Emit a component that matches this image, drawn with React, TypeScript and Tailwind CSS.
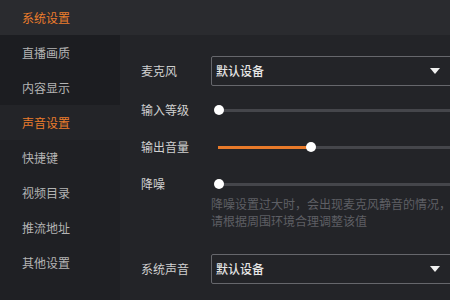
import React from 'react';

const font = { fontFamily: '"Noto Sans CJK SC", "Noto Sans", sans-serif' };

function Dropdown({ value }: { value: string }) {
  return (
    <div className="flex h-[30px] w-[242px] shrink-0 items-center justify-between rounded-[2px] border border-[#66676c] pl-[4px] pr-[12px]">
      <span className="text-[12px] font-medium text-[#e6e6e6]">{value}</span>
      <svg width="10" height="6" viewBox="0 0 10 6">
        <path d="M0 0 L10 0 L5 6 Z" fill="#f0f0f0" />
      </svg>
    </div>
  );
}

function Slider({ pct }: { pct: number }) {
  return (
    <div className="relative ml-[7px] h-[20px] w-[240px] shrink-0">
      <div className="absolute left-0 right-0 top-[9px] h-[3px] bg-[#45464b]" />
      <div className="absolute left-0 top-[9px] h-[3px] bg-[#e87a2a]" style={{ width: `${pct}px` }} />
      <div
        className="absolute top-[5px] h-[10px] w-[10px] rounded-full bg-white"
        style={{ left: `${pct - 5}px` }}
      />
    </div>
  );
}

function Label({ children }: { children: React.ReactNode }) {
  return <div className="w-[70px] shrink-0 text-[12px] text-[#d0d0d0]">{children}</div>;
}

export default function App() {
  const sub1 = ['直播画质', '内容显示'];
  const sub2 = ['快捷键', '视频目录', '推流地址', '其他设置'];
  return (
    <div className="flex h-[300px] w-[450px] flex-col overflow-hidden bg-[#232428]" style={font}>
      <div className="flex h-[35px] shrink-0 items-center bg-[#2a2b2f] pl-[22px] text-[12px] text-[#ec7d2c]">
        系统设置
      </div>
      <div className="flex flex-1">
        <div className="flex w-[120px] shrink-0 flex-col bg-[#1f2024]">
          <div className="bg-[#1c1d21]">
            {sub1.map((s) => (
              <div key={s} className="flex h-[35px] items-center pl-[22px] text-[12px] text-[#b4b4b4]">
                {s}
              </div>
            ))}
          </div>
          <div className="flex h-[35px] items-center bg-[#232428] pl-[22px] text-[12px] text-[#ec7d2c]">
            声音设置
          </div>
          {sub2.map((s) => (
            <div key={s} className="flex h-[35px] items-center pl-[22px] text-[12px] text-[#b4b4b4]">
              {s}
            </div>
          ))}
        </div>
        <div className="flex flex-1 flex-col pl-[21px] pt-[21px]">
          <div className="flex items-center">
            <Label>麦克风</Label>
            <Dropdown value="默认设备" />
          </div>
          <div className="mt-[14px] flex items-center">
            <Label>输入等级</Label>
            <Slider pct={1} />
          </div>
          <div className="mt-[17px] flex items-center">
            <Label>输出音量</Label>
            <Slider pct={93} />
          </div>
          <div className="mt-[17px] flex items-center">
            <Label>降噪</Label>
            <Slider pct={1} />
          </div>
          <div className="ml-[70px] mt-[1px] whitespace-nowrap text-[12px] leading-[17px] text-[#5e5f64]">
            <div>降噪设置过大时，会出现麦克风静音的情况，</div>
            <div>请根据周围环境合理调整该值</div>
          </div>
          <div className="mt-[25px] flex items-center">
            <Label>系统声音</Label>
            <Dropdown value="默认设备" />
          </div>
        </div>
      </div>
    </div>
  );
}
